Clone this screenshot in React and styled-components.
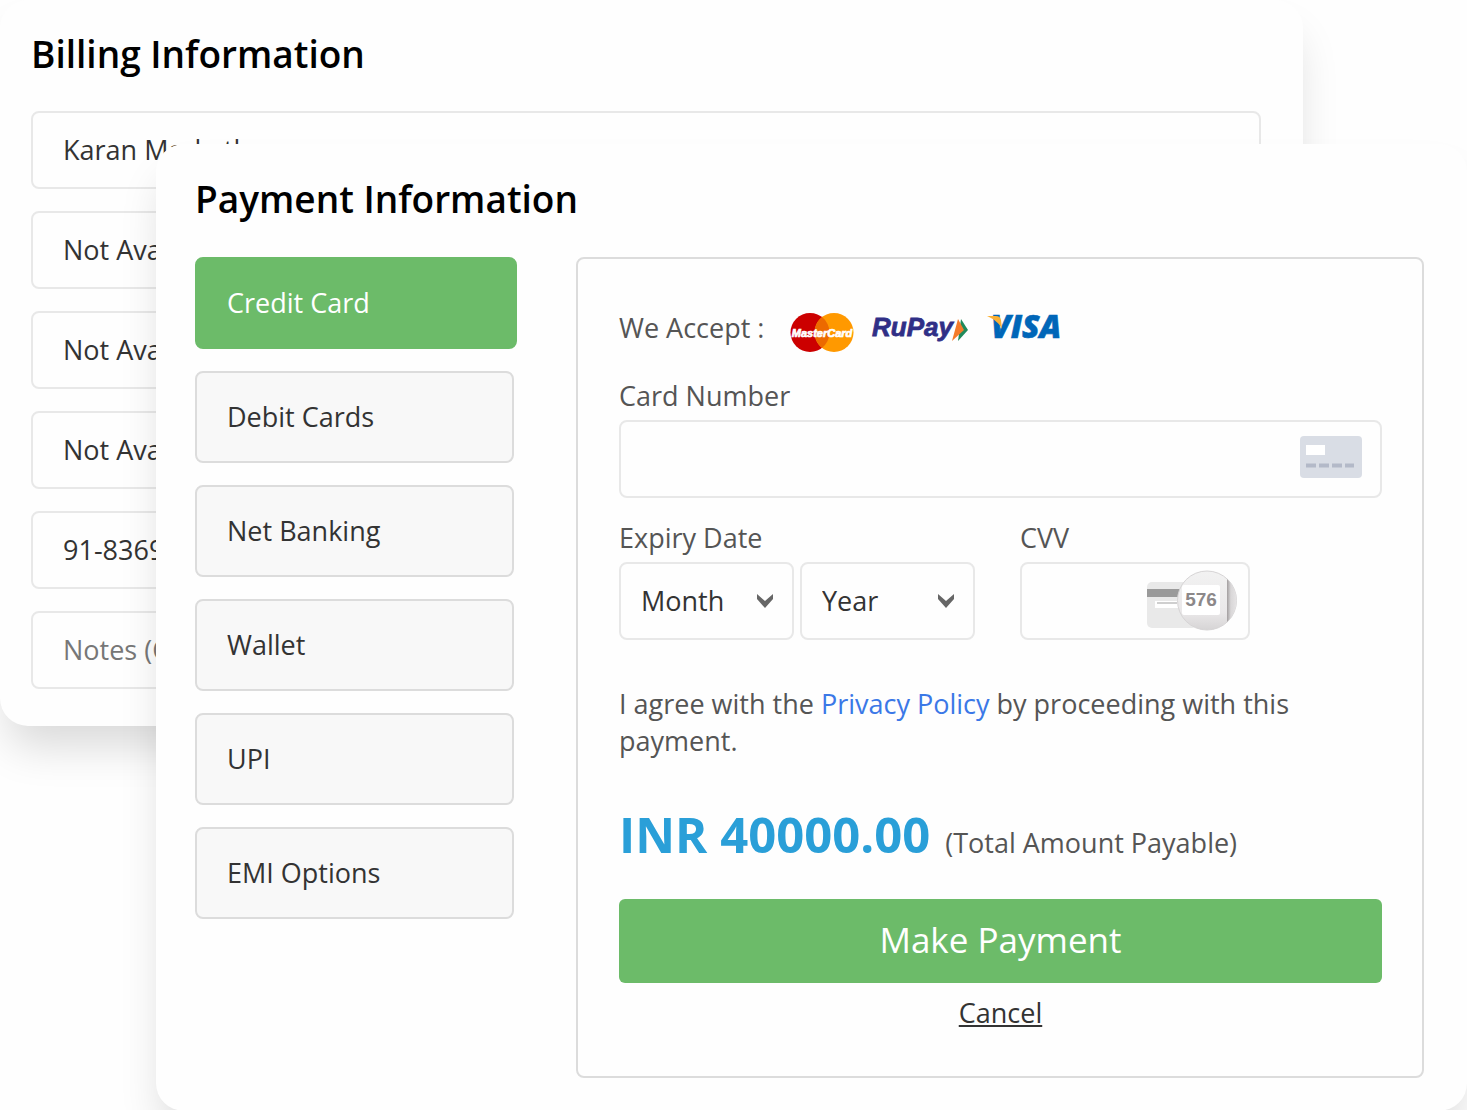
import React from "react";
import styled, { createGlobalStyle } from "styled-components";

const GlobalStyle = createGlobalStyle`
  * {
    box-sizing: border-box;
  }

  body {
    margin: 0;
    background: #fefefe;
    color: #333;
    font-family: "Open Sans", "Noto Sans", sans-serif;
    font-size: 27px;
    line-height: 37px;
  }

  input,
  select,
  button {
    font: inherit;
    color: inherit;
  }
`;

const billingFields = [
  { name: "name", label: "Name", value: "Karan Marketh" },
  { name: "address", label: "Address", value: "Not Available" },
  { name: "city", label: "City", value: "Not Available" },
  { name: "state", label: "State", value: "Not Available" },
  { name: "phone", label: "Phone", value: "91-8369000000" },
  { name: "notes", label: "Notes", placeholder: "Notes (Optional)" },
];

const methods = [
  "Credit Card",
  "Debit Cards",
  "Net Banking",
  "Wallet",
  "UPI",
  "EMI Options",
];

const MasterCardLogo = () => (
  <svg width="64" height="52" viewBox="0 0 64 52" role="img" aria-label="MasterCard">
    <circle cx="20" cy="31.5" r="19.5" fill="#cc0000" />
    <circle cx="44" cy="31.5" r="19.5" fill="#ff9900" />
    <path d="M32 16.100a19.500 19.500 0 0 1 0 30.800a19.500 19.500 0 0 1 0-30.800z" fill="#ec6a00" />
    <text
      x="32"
      y="36"
      textAnchor="middle"
      fontFamily="Liberation Sans, sans-serif"
      fontSize="11"
      fontWeight="700"
      fontStyle="italic"
      fill="#fff"
      stroke="#fff"
      strokeWidth="0.7"
    >
      MasterCard
    </text>
  </svg>
);

const RuPayLogo = () => (
  <svg width="97" height="52" viewBox="0 0 97 52" role="img" aria-label="RuPay">
    <text
      x="0"
      y="35"
      fontFamily="Liberation Sans, sans-serif"
      fontSize="26"
      fontWeight="700"
      fontStyle="italic"
      fill="#302f86"
      stroke="#302f86"
      strokeWidth="0.8"
    >
      RuPay
    </text>
    <path d="M89 18l7 11-10 11z" fill="#1f8a5b" />
    <path d="M86 18l6 11-12 11z" fill="#f47b2a" />
  </svg>
);

const VisaLogo = () => (
  <svg width="78" height="52" viewBox="0 0 78 52" role="img" aria-label="VISA">
    <text
      x="4"
      y="37"
      fontFamily="Open Sans, sans-serif"
      fontSize="32"
      fontWeight="800"
      fontStyle="italic"
      fill="#0066b8"
      stroke="#0066b8"
      strokeWidth="0.6"
    >
      VISA
    </text>
    <path d="M0 15h9c3 0 4 1 5 4l1 9C12 22 7 18 0 15z" fill="#fbb034" />
  </svg>
);

const CardIcon = () => (
  <svg width="62" height="42" viewBox="0 0 62 42" aria-hidden="true">
    <rect width="62" height="42" rx="4" fill="#d9dde5" />
    <rect x="6" y="9" width="19" height="10" fill="#fff" />
    <path d="M6 29.500h10m3 0h10m3 0h10m3 0h9" stroke="#b3b9c8" strokeWidth="4" />
  </svg>
);

const CvvIcon = () => (
  <svg width="92" height="62" viewBox="0 0 92 62" aria-hidden="true">
    <defs>
      <linearGradient id="lens" x1="0" y1="0" x2="0" y2="1">
        <stop offset="0" stopColor="#f2f2f2" />
        <stop offset="0.7" stopColor="#eae8e9" />
        <stop offset="1" stopColor="#d6d4d5" />
      </linearGradient>
      <linearGradient id="rim" x1="0" y1="0" x2="1" y2="0">
        <stop offset="0" stopColor="#a29e9f" />
        <stop offset="0.4" stopColor="#d9d7d8" />
        <stop offset="1" stopColor="#e6e4e5" />
      </linearGradient>
    </defs>
    <rect x="1" y="12" width="50" height="46" rx="5" fill="#e9e9e9" />
    <path d="M1 19h50v8H1z" fill="#9a9a9a" />
    <path d="M9 31h30v7H9z" fill="#fff" />
    <path d="M11 33h20" stroke="#cfcfcf" strokeWidth="2" />
    <circle cx="61" cy="30.5" r="29.5" fill="url(#lens)" stroke="#d6d4d5" />
    <path d="M81 9a29 29 0 0 1 0 43z" fill="url(#rim)" />
    <rect x="36" y="15" width="38" height="30" rx="2" fill="#fff" />
    <text
      x="55"
      y="36"
      textAnchor="middle"
      fontFamily="Liberation Sans, sans-serif"
      fontSize="19"
      fontWeight="700"
      fill="#8c8889"
    >
      576
    </text>
  </svg>
);

const Chevron = () => (
  <svg width="16" height="14" viewBox="0 0 16 14" aria-hidden="true">
    <path d="M0 0l8 7 8-7v5l-8 9-8-9z" fill="#666" />
  </svg>
);

const DatePart = ({ label }) => (
  <SelectBox>
    <Select aria-label={label} defaultValue="">
      <option value="">{label}</option>
    </Select>
    <Chevron />
  </SelectBox>
);

export default function App() {
  const [method, setMethod] = React.useState("Credit Card");

  return (
    <>
      <GlobalStyle />
      <Stage>
        <BillingCard>
          <Title>Billing Information</Title>
          <BillingFields>
            {billingFields.map(({ name, label, value, placeholder }) => (
              <TextInput
                key={name}
                name={name}
                aria-label={label}
                defaultValue={value}
                placeholder={placeholder}
              />
            ))}
          </BillingFields>
        </BillingCard>

        <PaymentCard>
          <Title>Payment Information</Title>
          <PaymentBody>
            <Methods>
              {methods.map(name => (
                <Method
                  key={name}
                  type="button"
                  $active={name === method}
                  onClick={() => setMethod(name)}
                >
                  {name}
                </Method>
              ))}
            </Methods>

            <Panel onSubmit={e => e.preventDefault()}>
              <Accept>
                <span>We Accept :</span>
                <Logos>
                  <MasterCardLogo />
                  <RuPayLogo />
                  <VisaLogo />
                </Logos>
              </Accept>

              <Label htmlFor="card-number">Card Number</Label>
              <IconField>
                <input id="card-number" inputMode="numeric" />
                <CardIcon />
              </IconField>

              <CardDetails>
                <Group as="fieldset">
                  <Label as="legend">Expiry Date</Label>
                  <Dates>
                    <DatePart label="Month" />
                    <DatePart label="Year" />
                  </Dates>
                </Group>
                <Group>
                  <Label htmlFor="cvv">CVV</Label>
                  <IconField $compact>
                    <input id="cvv" inputMode="numeric" />
                    <CvvIcon />
                  </IconField>
                </Group>
              </CardDetails>

              <Terms>
                I agree with the <a href="#privacy">Privacy Policy</a> by
                proceeding with this payment.
              </Terms>

              <Total>
                <strong>INR 40000.00</strong>
                <span>(Total Amount Payable)</span>
              </Total>

              <PayButton type="submit">Make Payment</PayButton>
              <Cancel href="#cancel">Cancel</Cancel>
            </Panel>
          </PaymentBody>
        </PaymentCard>
      </Stage>
    </>
  );
}

/* both cards share one cell, the payment card is shifted by its margins */
const Stage = styled.main`
  display: grid;
  align-items: start;
  overflow: hidden;

  > * {
    grid-area: 1 / 1;
  }
`;

const Card = styled.section`
  background: #fefefe;
  border-radius: 28px;
  box-shadow: 0 28px 44px -8px rgba(0, 0, 0, 0.15);
`;

const BillingCard = styled(Card)`
  margin-right: 164px;
  padding: 28px 42px 37px 31px;
`;

const PaymentCard = styled(Card)`
  margin: 144px 0 0 156px;
  padding: 29px 43px 33px 39px;
`;

const Title = styled.h1`
  margin: 0;
  color: #000;
  font-size: 37px;
  font-weight: 600;
  line-height: 52px;
`;

const BillingFields = styled.form`
  display: flex;
  flex-direction: column;
  gap: 22px;
  margin-top: 31px;
`;

const TextInput = styled.input`
  width: 100%;
  height: 78px;
  padding: 0 30px 2px;
  background: transparent;
  border: 2px solid #e8e8e8;
  border-radius: 8px;
  outline: none;

  &::placeholder {
    color: #777;
    opacity: 1;
  }
`;

const PaymentBody = styled.div`
  display: flex;
  align-items: flex-start;
  gap: 59px;
  margin-top: 32px;
`;

const Methods = styled.nav`
  display: flex;
  flex: 0 0 322px;
  flex-direction: column;
  gap: 22px;
`;

const Method = styled.button`
  width: ${({ $active }) => ($active ? "322px" : "319px")};
  height: 92px;
  padding: 0 30px 2px;
  background: ${({ $active }) => ($active ? "#6cbb69" : "#f8f8f8")};
  border: 2px solid ${({ $active }) => ($active ? "#6cbb69" : "#dcdcdc")};
  border-radius: 8px;
  color: ${({ $active }) => ($active ? "#fff" : "#333")};
  text-align: left;
  cursor: pointer;
`;

const Panel = styled.form`
  flex: 1;
  min-width: 0;
  padding: 41px 40px 45px 41px;
  border: 2px solid #dcdcdc;
  border-radius: 8px;
  color: #555;
`;

const Accept = styled.div`
  display: flex;
  align-items: center;
  gap: 26px;
  height: 54px;
  margin-bottom: 23px;
`;

const Logos = styled.div`
  display: flex;
  align-items: center;
  gap: 18px;

  svg {
    overflow: visible;
  }
`;

const Label = styled.label`
  display: block;
  padding: 0;
`;

const IconField = styled.div`
  display: flex;
  align-items: center;
  width: ${({ $compact }) => ($compact ? "230px" : "100%")};
  height: 78px;
  margin-top: 6px;
  padding: ${({ $compact }) => ($compact ? "0 10px 0 20px" : "0 18px 4px 20px")};
  border: 2px solid #e8e8e8;
  border-radius: 8px;

  input {
    flex: 1;
    min-width: 0;
    padding: 0;
    background: none;
    border: 0;
    outline: none;
  }

  svg {
    flex: none;
  }
`;

const CardDetails = styled.div`
  display: flex;
  gap: 45px;
  margin-top: 21px;
`;

const Group = styled.div`
  margin: 0;
  padding: 0;
  border: 0;
`;

const Dates = styled.div`
  display: flex;
  gap: 6px;
  margin-top: 6px;
`;

const SelectBox = styled.div`
  display: grid;
  align-items: center;
  width: 175px;

  > * {
    grid-area: 1 / 1;
  }

  svg {
    justify-self: end;
    margin-right: 21px;
    pointer-events: none;
  }
`;

const Select = styled.select`
  width: 100%;
  height: 78px;
  padding: 0 20px 2px;
  appearance: none;
  background: transparent;
  border: 2px solid #e8e8e8;
  border-radius: 8px;
  color: #333;
`;

const Terms = styled.p`
  margin: 45px 0 0;

  a {
    color: #3b78e7;
    text-decoration: none;
  }
`;

const Total = styled.p`
  display: flex;
  align-items: baseline;
  gap: 15px;
  margin: 43px 0 0;
  line-height: 64px;

  strong {
    color: #2a9fd8;
    font-size: 49px;
    font-weight: 700;
  }
`;

const PayButton = styled.button`
  width: 100%;
  height: 84px;
  margin-top: 24px;
  padding: 0 0 4px;
  background: #6cbb69;
  border: 0;
  border-radius: 6px;
  color: #fff;
  font-size: 35px;
  cursor: pointer;
`;

const Cancel = styled.a`
  display: block;
  width: fit-content;
  margin: 11px auto 0;
  color: #333;
`;
